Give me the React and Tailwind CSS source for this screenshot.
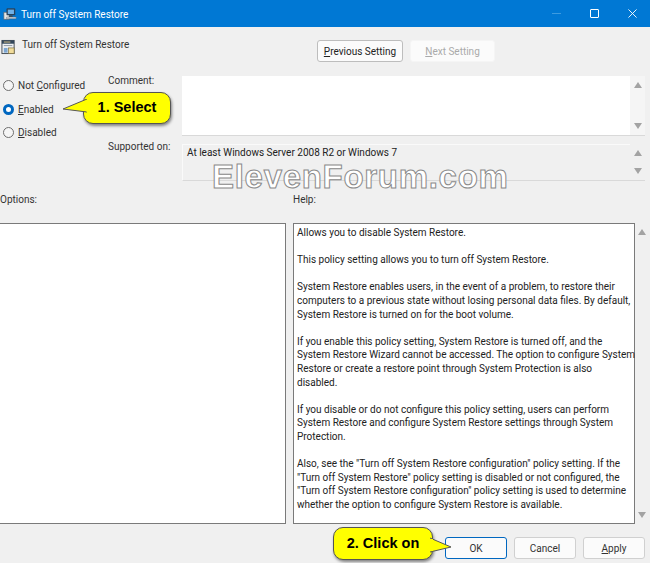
const HELP = [
  ['Allows you to disable System Restore.'],
  ['This policy setting allows you to turn off System Restore.'],
  [
    'System Restore enables users, in the event of a problem, to restore their',
    'computers to a previous state without losing personal data files. By default,',
    'System Restore is turned on for the boot volume.',
  ],
  [
    'If you enable this policy setting, System Restore is turned off, and the',
    'System Restore Wizard cannot be accessed. The option to configure System',
    'Restore or create a restore point through System Protection is also',
    'disabled.',
  ],
  [
    'If you disable or do not configure this policy setting, users can perform',
    'System Restore and configure System Restore settings through System',
    'Protection.',
  ],
  [
    'Also, see the "Turn off System Restore configuration" policy setting. If the',
    '"Turn off System Restore" policy setting is disabled or not configured, the',
    '"Turn off System Restore configuration" policy setting is used to determine',
    'whether the option to configure System Restore is available.',
  ],
];

const AppIcon = ({ className }) => (
  <svg viewBox="0 0 16 16" className={className}>
    <rect x="1" y="6" width="6" height="8" fill="#e6e6e6" stroke="#5c6670" strokeWidth="0.8" />
    <rect x="4" y="1.5" width="10" height="8" rx="1" fill="#29435c" />
    <rect x="5.5" y="3" width="7" height="5" fill="#6fb1e8" />
    <rect x="7" y="9.5" width="4" height="2" fill="#3a4a58" />
    <rect x="4" y="11.5" width="11" height="2" rx="0.5" fill="#d8dde2" stroke="#4f5963" strokeWidth="0.5" />
  </svg>
);

const PolicyIcon = ({ className }) => (
  <svg viewBox="0 0 16 16" className={className}>
    <rect x="1" y="1" width="13" height="14" fill="#eef0f2" stroke="#3e4750" />
    <rect x="1" y="1" width="13" height="3.5" fill="#33475b" />
    <rect x="3" y="2.2" width="7" height="1" fill="#d9c48a" />
    <rect x="3" y="6" width="9" height="1" fill="#8a96a2" />
    <rect x="8" y="9" width="6" height="6" fill="#f1dc9c" stroke="#77683a" strokeWidth="0.7" />
    <rect x="3" y="9" width="4" height="5" fill="#7da6d1" />
  </svg>
);

const Arrow = ({ up }) => (
  <div
    className={`w-0 h-0 border-x-[4.5px] border-x-transparent ${up ? 'border-b-[6px] border-b-[#a3a3a3]' : 'border-t-[6px] border-t-[#a3a3a3]'}`}
  />
);

const ScrollBar = ({ className }) => (
  <div className={`flex flex-col items-center justify-between py-[6px] ${className}`}>
    <Arrow up />
    <Arrow />
  </div>
);

const Radio = ({ label, u, rest, checked }) => (
  <div className="flex items-center gap-[4px] h-[23.5px] pl-[3px]">
    {checked ? (
      <div className="w-[11px] h-[11px] rounded-full border-[3px] border-[#0067c0] bg-white" />
    ) : (
      <div className="w-[11px] h-[11px] rounded-full border border-[#6e6e6e] bg-[#f5f5f5]" />
    )}
    <span className="text-[#333]">
      {label}
      <span className="underline">{u}</span>
      {rest}
    </span>
  </div>
);

const Btn = ({ children, className }) => (
  <button className={`h-[22px] rounded-[3px] border bg-[#fbfbfb] ${className}`}>{children}</button>
);

const Callout = ({ children, className, tail }) => (
  <div className={`absolute z-20 ${className}`}>
    <div className="relative h-full rounded-[10px] border border-[#555] bg-[#ffff00] shadow-[1px_2px_3px_rgba(0,0,0,0.45)] flex items-center justify-center font-['Liberation_Sans',sans-serif] font-bold text-[14.5px] text-black">
      {children}
    </div>
    {tail}
  </div>
);

export default function App() {
  return (
    <div className="relative w-[650px] h-[563px] overflow-hidden bg-[#f0f0f0] font-['Roboto',sans-serif] text-[10px] text-[#222]">
      {/* title bar */}
      <div className="h-[27px] bg-[#0078d4] flex items-center text-white">
        <AppIcon className="w-[14px] h-[14px] ml-[3px] mr-[4px]" />
        <span className="mt-[1px]">Turn off System Restore</span>
        <div className="ml-auto flex items-center">
          <div className="w-[9px] h-px bg-[#3d9be0] mr-[29px]" />
          <div className="w-[9px] h-[9px] rounded-[1px] border border-white mr-[29px]" />
          <svg viewBox="0 0 10 10" className="w-[9px] h-[9px] mr-[13px]">
            <path d="M0.5 0.5 L9.5 9.5 M9.5 0.5 L0.5 9.5" stroke="#fff" strokeWidth="1" />
          </svg>
        </div>
      </div>

      {/* header row */}
      <div className="flex h-[47px] pt-[13px]">
        <div className="w-[317px] flex items-start">
          <PolicyIcon className="w-[15px] h-[16px] ml-px mt-[-1px] mr-[6px]" />
          <span className="text-[#333] mt-[-3px]">Turn off System Restore</span>
        </div>
        <Btn className="w-[86px] border-[#bdbdbd] text-[#222]">
          <span className="underline">P</span>revious Setting
        </Btn>
        <Btn className="w-[85px] ml-[7px] border-[#f5f5f5] bg-[#f6f6f6] text-[#aaa]">
          <span className="underline">N</span>ext Setting
        </Btn>
      </div>

      {/* radios + comment + supported */}
      <div className="flex">
        <div className="w-[108px] flex flex-col">
          <Radio label="Not " u="C" rest="onfigured" />
          <Radio u="E" rest="nabled" checked />
          <Radio u="D" rest="isabled" />
        </div>
        <div className="flex-1 flex flex-col">
          <div className="flex">
            <span className="w-[74px] text-[#333] mt-[-1px]">Comment:</span>
            <div className="w-[448px] h-[60px] bg-white mt-[2px] border-b border-[#d9d9d9]" />
            <ScrollBar className="w-[15px] h-[60px] mt-[2px] bg-[#f5f5f5] border-b border-[#d9d9d9]" />
          </div>
          <div className="flex mt-[8px]">
            <span className="w-[74px] text-[#333] mt-[-5px]">Supported on:</span>
            <div className="w-[448px] h-[37px] px-[4px] border-t border-l border-b border-[#fafafa] border-b-[#d9d9d9] text-[#222]">
              At least Windows Server 2008 R2 or Windows 7
            </div>
            <ScrollBar className="w-[15px] h-[37px] border-b border-[#d9d9d9]" />
          </div>
        </div>
      </div>

      {/* labels */}
      <div className="flex h-[42px] pt-[11px] text-[#333]">
        <span className="w-[293px]">Options:</span>
        <span>Help:</span>
      </div>

      {/* panels */}
      <div className="flex">
        <div className="w-[286px] h-[301px] bg-white border border-l-0 border-[#7a7a7a]" />
        <div className="w-[342px] h-[301px] ml-[7px] bg-white border border-[#7a7a7a] pl-[3px] pt-[2px] leading-[13.6px] text-[#222] whitespace-nowrap">
          {HELP.map((para, i) => (
            <p key={i} className="mb-[13.6px]">
              {para.map((line) => (
                <span key={line} className="block">{line}</span>
              ))}
            </p>
          ))}
        </div>
        <ScrollBar className="w-[14px] h-[301px]" />
      </div>

      {/* bottom buttons */}
      <div className="flex justify-end pr-[5px] pt-[13px] text-[#333]">
        <Btn className="w-[62px] border-[#0067c0]">OK</Btn>
        <Btn className="w-[62px] ml-[7px] border-[#d0d0d0]">Cancel</Btn>
        <Btn className="w-[62px] ml-[7px] border-[#d0d0d0]">
          <span className="underline">A</span>pply
        </Btn>
      </div>

      {/* watermark */}
      <div className="absolute z-10 left-[212px] top-[162px] font-['Liberation_Sans',sans-serif] font-bold text-[33px] leading-[30px] tracking-[0.7px] text-white [-webkit-text-stroke:1px_#8a8a8a]">
        ElevenForum.com
      </div>

      {/* callouts */}
      <Callout
        className="left-[83px] top-[92px] w-[88px] h-[32px]"
        tail={
          <svg viewBox="0 0 24 14" className="absolute left-[-20px] top-[7px] w-[24px] h-[14px]">
            <path d="M24 0 L0 10 L24 13" fill="#ffff00" stroke="#555" strokeWidth="1" />
            <path d="M24 1 L23 1 L23 12.5 L24 12.5 Z" fill="#ffff00" />
          </svg>
        }
      >
        1. Select
      </Callout>
      <Callout
        className="left-[333px] top-[527px] w-[100px] h-[33px]"
        tail={
          <svg viewBox="0 0 22 16" className="absolute left-[97px] top-[10px] w-[22px] h-[16px]">
            <path d="M0 1 L21 10 L0 15" fill="#ffff00" stroke="#555" strokeWidth="1" />
            <path d="M0 2 L3 2 L3 14 L0 14 Z" fill="#ffff00" />
          </svg>
        }
      >
        2. Click on
      </Callout>
    </div>
  );
}
